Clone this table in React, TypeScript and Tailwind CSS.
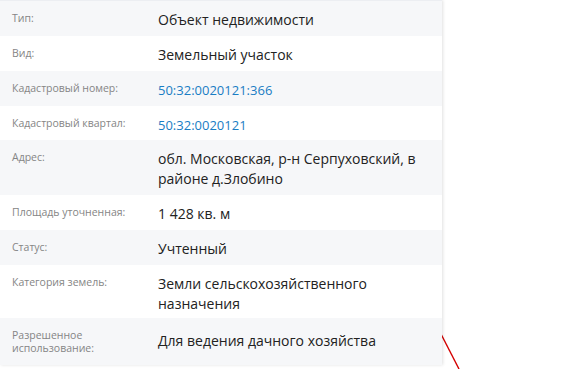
import React from "react";

type Row = { label: string[]; value: string[]; link?: boolean; center?: boolean; h: string; gray: boolean };

const rows: Row[] = [
  { label: ["Тип:"], value: ["Объект недвижимости"], h: "h-[35px]", gray: true },
  { label: ["Вид:"], value: ["Земельный участок"], h: "h-[35px]", gray: false },
  { label: ["Кадастровый номер:"], value: ["50:32:0020121:366"], link: true, h: "h-[35px]", gray: true },
  { label: ["Кадастровый квартал:"], value: ["50:32:0020121"], link: true, h: "h-[34px]", gray: false },
  { label: ["Адрес:"], value: ["обл. Московская, р-н Серпуховский, в", "районе д.Злобино"], h: "h-[55px]", gray: true },
  { label: ["Площадь уточненная:"], value: ["1 428 кв. м"], h: "h-[35px]", gray: false },
  { label: ["Статус:"], value: ["Учтенный"], h: "h-[35px]", gray: true },
  { label: ["Категория земель:"], value: ["Земли сельскохозяйственного", "назначения"], h: "h-[53px]", gray: false },
  { label: ["Разрешенное", "использование:"], value: ["Для ведения дачного хозяйства"], center: true, h: "h-[47px]", gray: true },
];

export default function App() {
  return (
    <div className="relative w-[576px] h-[369px] overflow-hidden bg-white" style={{ fontFamily: '"Open Sans", "Noto Sans", sans-serif' }}>
      <svg className="absolute left-0 top-0" width="576" height="369">
        <line x1="441" y1="334" x2="459" y2="369" stroke="#d40000" strokeWidth="1.4" />
      </svg>
      <div className="relative w-[442px] border-t border-[#eceef2] bg-white shadow-[1px_0_3px_rgba(0,0,0,0.12)]">
        {rows.map((r, i) => (
          <div key={i} className={`flex ${r.h} ${r.gray ? "bg-[#f6f7f9]" : "bg-white"}`}>
            <div className="w-[158px] shrink-0 pl-3 pt-[11px] text-[10.5px] leading-[13px] text-[#858585]">
              {r.label.map((l, j) => (
                <div key={j}>{l}</div>
              ))}
            </div>
            <div
              className={`flex-1 pr-3 ${r.center ? "self-center pb-[2px]" : "pt-[9px]"} ${
                r.link ? "text-[13px] leading-[20px] text-[#1a7dc4]" : "text-[14px] leading-[20px] text-[#222]"
              }`}
            >
              {r.value.map((v, j) => (
                <div key={j}>{v}</div>
              ))}
            </div>
          </div>
        ))}
      </div>
    </div>
  );
}
